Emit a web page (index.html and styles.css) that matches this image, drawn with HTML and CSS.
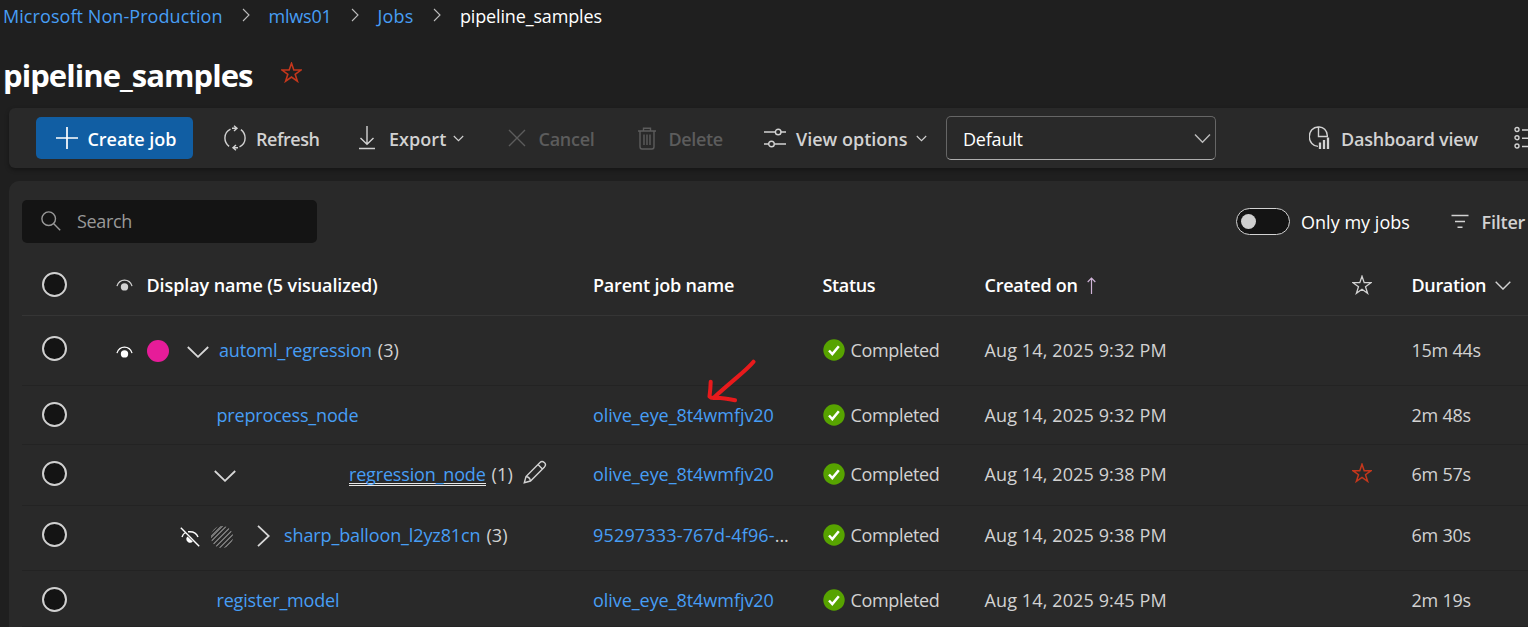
FILE: index.html
```html
<!DOCTYPE html>
<html lang="en">
<head>
<meta charset="utf-8">
<title>pipeline_samples</title>
<link rel="stylesheet" href="styles.css">
</head>
<body>
<svg class="defs" aria-hidden="true">
  <symbol id="star" viewBox="0 0 20 20"><path d="M10 1.2 12.2 7.7H19L13.5 11.7 15.6 18.3 10 14.3 4.4 18.3 6.5 11.7 1 7.7H7.8Z"/></symbol>
  <symbol id="check" viewBox="0 0 22 22"><circle cx="11" cy="11" r="10.7" fill="#57a300"/><path d="M6 11.5 9.3 15 15.8 7.2" fill="none" stroke="#fff" stroke-width="2.5"/></symbol>
  <symbol id="eye" viewBox="0 0 18 14"><path d="M1 8.2C2.5 3.900 5.600 1.900 9 1.900S15.500 3.900 17 8.200" fill="none" stroke="currentColor" stroke-width="1.3"/><circle cx="9" cy="9" r="3.900" fill="currentColor"/></symbol>
</svg>

<nav class="crumbs">
  <a class="c1">Microsoft Non-Production</a>
  <svg class="sep" viewBox="0 0 8 14"><path d="M1 1 7 7 1 13"/></svg>
  <a class="c2">mlws01</a>
  <svg class="sep" viewBox="0 0 8 14"><path d="M1 1 7 7 1 13"/></svg>
  <a class="c3">Jobs</a>
  <svg class="sep" viewBox="0 0 8 14"><path d="M1 1 7 7 1 13"/></svg>
  <span class="c4">pipeline_samples</span>
</nav>

<header class="title">
  <h1>pipeline_samples</h1>
  <svg class="star fav"><use href="#star"/></svg>
</header>

<div class="toolbar">
  <button class="primary">
    <svg width="24" height="24" viewBox="0 0 24 24"><path d="M12 1V23M1 12H23" stroke="#fff" stroke-width="1.700"/></svg>
    <span>Create job</span>
  </button>
  <div class="tool refresh">
    <svg width="22" height="26" viewBox="0 0 22 26" class="line"><path d="M6.500 4.200C2.800 6 .9 9.500 .9 13c0 3.600 1.600 6.400 4.200 8.400M8 3.200h5M10 .8l3 2.400-3 2.700M15.500 21.800c3.700-1.800 5.600-5.300 5.600-8.800 0-3.600-1.600-6.400-4.200-8.400M14 22.800H9M12 20.100l-3 2.700 3 2.400"/></svg>
    <span>Refresh</span>
  </div>
  <div class="tool export">
    <svg width="18" height="24" viewBox="0 0 18 24" class="line"><path d="M9 0V18M2.500 12 9 18.300 15.500 12M1 22.500H17"/></svg>
    <span>Export</span>
    <svg class="caret" viewBox="0 0 11 7"><path d="M.8 1 5.500 5.700 10.200 1"/></svg>
  </div>
  <div class="tool off cancel">
    <svg width="18" height="18" viewBox="0 0 18 18" class="line"><path d="M1 1 17 17M17 1 1 17"/></svg>
    <span>Cancel</span>
  </div>
  <div class="tool off delete">
    <svg width="18" height="23" viewBox="0 0 18 23" class="line"><path d="M0 4H18M5.500 4V1.200H12.500V4M2 4V19.500Q2 22 4 22H14Q16 22 16 19.500V4M6 7.500V18M9 7.500V18M12 7.500V18"/></svg>
    <span>Delete</span>
  </div>
  <div class="tool view">
    <svg width="22" height="20" viewBox="0 0 22 20" class="line"><path d="M0 4H11.500M17 4H22M0 16H5M10.500 16H22"/><circle cx="14.200" cy="4" r="2.800"/><circle cx="7.500" cy="16" r="2.800"/></svg>
    <span>View options</span>
    <svg class="caret" viewBox="0 0 11 7"><path d="M.8 1 5.500 5.700 10.200 1"/></svg>
  </div>
  <div class="select">
    <span>Default</span>
    <svg width="17" height="11" viewBox="0 0 17 11" class="line"><path d="M1 1.500 8.500 9.200 16 1.500"/></svg>
  </div>
  <div class="tool dash">
    <svg width="22" height="24" viewBox="0 0 22 24" class="line"><path d="M9 20.400A8.700 9.700 0 0 1 9 1H10A8 9 0 0 1 18.300 9.500M9.500 1V10.500H18.300V9"/><path d="M11 16.500V23M15 14V23M19 11.500V23" stroke-width="2.300"/></svg>
    <span>Dashboard view</span>
  </div>
  <svg class="list line" width="20" height="24" viewBox="0 0 20 24"><circle cx="3" cy="3.500" r="2"/><circle cx="3" cy="11.700" r="2"/><circle cx="3" cy="20" r="2"/><path d="M8 4H20M8 12.200H20M8 20.500H20"/></svg>
</div>

<main class="panel">
  <div class="filters">
    <div class="search">
      <svg width="20" height="20" viewBox="0 0 20 20" class="line"><circle cx="7.700" cy="7.700" r="6.800"/><path d="M12.500 12.500 19.200 19.200"/></svg>
      <span>Search</span>
    </div>
    <div class="toggle"><i></i></div>
    <span class="mine">Only my jobs</span>
    <svg class="funnel" width="18" height="15" viewBox="0 0 18 15"><path d="M.5 1.500H17.500M4 7.500H14M6.500 13.300H11.500"/></svg>
    <span class="filter">Filter</span>
  </div>

  <div class="row head">
    <i class="radio"></i>
    <div class="name"><svg class="eye dim"><use href="#eye"/></svg><span class="h1c">Display name (5 visualized)</span></div>
    <div class="h2c">Parent job name</div>
    <div class="h3c">Status</div>
    <div class="h4c"><span>Created on</span><svg width="9" height="17" viewBox="0 0 9 17"><path d="M4.500 17V1.200M.7 5 4.500 1.200 8.300 5" fill="none" stroke="#d0b4d8" stroke-width="1.200"/></svg></div>
    <div class="fcell"><svg class="star dim"><use href="#star"/></svg></div>
    <div class="h5c"><span>Duration</span><svg width="16" height="9" viewBox="0 0 16 9" class="line"><path d="M.7 .8 8 8.100 15.300 .8"/></svg></div>
  </div>

  <div class="row r1">
    <i class="radio"></i>
    <div class="name"><svg class="eye"><use href="#eye"/></svg><i class="dot"></i><svg class="down" viewBox="0 0 22 12"><path d="M.8 1 11 10.800 21.200 1"/></svg><a>automl_regression</a><span class="n">(3)</span></div>
    <div></div>
    <div class="status"><svg><use href="#check"/></svg><span>Completed</span></div>
    <div class="date">Aug 14, 2025 9:32 PM</div>
    <div></div>
    <div class="dur">15m 44s</div>
  </div>

  <div class="row r2">
    <i class="radio"></i>
    <div class="name leaf"><a>preprocess_node</a></div>
    <div class="parent"><a>olive_eye_8t4wmfjv20</a></div>
    <div class="status"><svg><use href="#check"/></svg><span>Completed</span></div>
    <div class="date">Aug 14, 2025 9:32 PM</div>
    <div></div>
    <div class="dur">2m 48s</div>
  </div>

  <div class="row r3">
    <i class="radio"></i>
    <div class="name"><svg class="down" viewBox="0 0 22 12"><path d="M.8 1 11 10.800 21.200 1"/></svg><a class="under">regression_node</a><span class="n">(1)</span><svg class="pencil line" width="24" height="24" viewBox="0 0 24 24"><path d="M1.300 22.700 3 16.500 17 2.400Q19 .4 21.300 2.500T21.500 6.900L7.500 21 1.300 22.700ZM3 16.500Q6.800 17 7.500 21M15 4.500 19.400 8.900"/></svg></div>
    <div class="parent"><a>olive_eye_8t4wmfjv20</a></div>
    <div class="status"><svg><use href="#check"/></svg><span>Completed</span></div>
    <div class="date">Aug 14, 2025 9:38 PM</div>
    <div class="fcell"><svg class="star fav"><use href="#star"/></svg></div>
    <div class="dur">6m 57s</div>
  </div>

  <div class="row r4">
    <i class="radio"></i>
    <div class="name"><svg class="eyeoff" width="20" height="20" viewBox="0 0 20 20"><path d="M.8 .8 19.200 19.200M2 10C2.800 7.500 4 6.300 5.500 5.500M8 4.800C13 4.200 16.500 6 18 10" fill="none" stroke="#fff" stroke-width="1.400"/><path d="M7.500 9.500 12.800 14.500A3.500 3.500 0 1 1 7.500 9.500Z" fill="#fff"/></svg><i class="dot hatch"></i><svg class="right" viewBox="0 0 13 22"><path d="M1 .8 11.800 11 1 21.200"/></svg><a class="sharp">sharp_balloon_l2yz81cn</a><span class="n">(3)</span></div>
    <div class="parent"><a class="uuid">95297333-767d-4f96-</a>...</div>
    <div class="status"><svg><use href="#check"/></svg><span>Completed</span></div>
    <div class="date">Aug 14, 2025 9:38 PM</div>
    <div></div>
    <div class="dur">6m 30s</div>
  </div>

  <div class="row r5">
    <i class="radio"></i>
    <div class="name leaf"><a>register_model</a></div>
    <div class="parent"><a>olive_eye_8t4wmfjv20</a></div>
    <div class="status"><svg><use href="#check"/></svg><span>Completed</span></div>
    <div class="date">Aug 14, 2025 9:45 PM</div>
    <div></div>
    <div class="dur">2m 19s</div>
  </div>

  <svg class="arrow" width="52" height="46" viewBox="0 0 52 46"><path d="M47.500 2.700C41 11 27 21 8 38.500M4.700 22.800Q4.500 30 3.500 37.500 5 39.500 10 38.800 18 39 29 41.300" fill="none" stroke="#e81a1c" stroke-width="4" stroke-linecap="round" stroke-linejoin="round"/></svg>
</main>
</body>
</html>
```
FILE: styles.css
```css
* { box-sizing: border-box; }
body {
  margin: 0;
  width: 1528px;
  height: 627px;
  overflow: hidden;
  background: #1f1f1f;
  color: #d2d2d2;
  font: 18px/26px "Open Sans", "Noto Sans", sans-serif;
  letter-spacing: -0.35px;
  white-space: nowrap;
}
svg { flex: none; display: block; }
span, a { flex: none; }
a { color: #479ef5; }
.defs { position: absolute; width: 0; height: 0; }
.line { fill: none; stroke: currentColor; stroke-width: 1.4; }

.crumbs { display: flex; align-items: center; height: 32px; padding-left: 3px; }
.crumbs a, .crumbs span { line-height: 32px; }
.crumbs span { color: #fff; }
.c1 { width: 220px; letter-spacing: 0.07px; }
.c2 { width: 63.5px; letter-spacing: -0.2px; }
.c3 { width: 37px; letter-spacing: 0.2px; }
.c4 { letter-spacing: -0.15px; }
.sep { width: 8px; height: 14px; margin: -3px 19px 0 18.5px; fill: none; stroke: #bdbdbd; stroke-width: 1.1; }

.title { display: flex; height: 76px; padding-left: 3px; }
h1 { margin: 0; width: 277.5px; font-size: 31px; line-height: 87px; font-weight: 700; color: #fff; letter-spacing: -0.95px; }
.star { width: 20px; height: 20px; fill: none; stroke: currentColor; stroke-width: 1.3; }
.fav { color: #c4371c; stroke-width: 1.5; }
.title .star { margin-top: 30px; width: 21px; height: 21px; }

.toolbar {
  display: flex;
  align-items: center;
  height: 60px;
  margin-left: 9px;
  padding-left: 27px;
  background: #292929;
  border-radius: 6px 0 0 6px;
  box-shadow: 0 2px 4px rgba(0, 0, 0, .35);
  font-weight: 600;
}
.toolbar > * { flex: none; }
.toolbar span { padding-top: 2px; }
.primary {
  display: flex;
  align-items: center;
  gap: 9px;
  width: 157px;
  height: 42px;
  padding: 0 0 0 18.5px;
  border: 0;
  border-radius: 5px;
  background: #115ea3;
  color: #fff;
  font: inherit;
  letter-spacing: -0.05px;
}
.tool { display: flex; align-items: center; height: 42px; }
.off { color: #5c5c5c; }
.caret { width: 11px; height: 7px; fill: none; stroke: currentColor; stroke-width: 1.1; }
.refresh { gap: 10px; margin-left: 31px; width: 134px; letter-spacing: -0.45px; }
.export { gap: 13px; width: 150px; letter-spacing: 0.05px; }
.export .caret { margin-left: -6px; }
.cancel { gap: 12.5px; width: 129.5px; letter-spacing: -0.25px; }
.delete { gap: 13px; width: 126.5px; }
.view { gap: 10px; width: 182px; letter-spacing: 0; }
.view .caret { margin-left: -1px; }
.select {
  display: flex;
  align-items: center;
  justify-content: space-between;
  width: 270px;
  height: 44px;
  padding: 0 4px 0 16px;
  border: 1px solid #666;
  border-bottom-color: #adadad;
  border-radius: 5px;
  color: #fff;
  font-weight: 400;
  letter-spacing: -0.2px;
}
.select svg { color: #bdbdbd; }
.dash { gap: 10px; margin-left: 93px; width: 205px; letter-spacing: -0.2px; }

.panel {
  position: relative;
  margin: 13px 0 0 9px;
  height: 446px;
  padding-left: 13px;
  background: #292929;
  border-radius: 10px 0 0 0;
}
.filters { display: flex; align-items: center; height: 62px; padding-top: 19px; }
.search {
  display: flex;
  align-items: center;
  gap: 16px;
  width: 295px;
  height: 43px;
  padding: 0 0 2px 19px;
  background: #141414;
  border-radius: 5px;
  color: #999;
}
.toggle { width: 54px; height: 27px; margin-left: 919px; padding: 5px 4px; border: 1px solid #d2d2d2; border-radius: 14px; background: #141414; }
.toggle i { display: block; width: 15px; height: 15px; border-radius: 50%; background: #cfcfcf; }
.mine { width: 150px; margin-left: 11px; color: #fff; letter-spacing: 0.03px; }
.funnel { fill: none; stroke: #d2d2d2; stroke-width: 1.5; }
.filter { margin-left: 12.5px; font-weight: 600; letter-spacing: -0.2px; }

.row {
  display: grid;
  grid-template-columns: 95px 476px 229.5px 162px 346px 81px 1fr;
  line-height: 58px;
  border-bottom: 1px solid #232323;
  align-items: start;
}
.radio { width: 25px; height: 25px; margin: 16px 0 0 20px; border: 2px solid #d0d0d0; border-radius: 50%; background: #141414; }
.head { height: 73px; line-height: 84px; font-weight: 600; color: #fff; border-bottom-color: #353535; }
.head .radio { margin-top: 29px; }
.head div { display: flex; align-items: center; height: 84px; }
.head .h1c { letter-spacing: -0.1px; }
.head .h2c { letter-spacing: -0.2px; }
.h4c { letter-spacing: -0.25px; gap: 9px; }
.dim { color: #d2d2d2; }
.eye { width: 17px; height: 14px; color: #fff; margin-left: -1px; }
.head .eye { color: #d2d2d2; margin-right: 13.5px; }
.h5c { gap: 9px; }
.h5c svg { color: #d2d2d2; }
.r1 { height: 70px; padding-top: 5px; }
.r1 .radio { margin-top: 15px; }
.r2 { height: 59px; }
.r3 { height: 61px; }
.r4 { height: 65px; }
.r5 { height: 56px; }
.name, .status, .fcell { display: flex; align-items: center; height: 58px; }
.name a { letter-spacing: -0.17px; }
.name .sharp { letter-spacing: -0.12px; }
.parent { letter-spacing: -0.05px; }
.uuid { letter-spacing: 0.17px; }
.date { letter-spacing: 0.12px; }
.dur { letter-spacing: -0.25px; }
.leaf { padding-left: 99.5px; }
.fcell { padding-left: 21px; }
.r3 .fcell { height: 56px; }
.status svg { width: 22px; height: 22px; margin-right: 6px; }
.dot { width: 22px; height: 22px; flex: none; border-radius: 50%; background: #e61c99; }
.hatch { background: repeating-linear-gradient(135deg, #777 0 1.5px, #292929 1.5px 3.5px); }
.down, .right { fill: none; stroke: #d8d8d8; stroke-width: 1.800; }
.down { width: 22px; height: 12px; }
.right { width: 13px; height: 22px; }
.n { margin-left: 6px; letter-spacing: 0.1px; }
.r1 .dot { margin: 2px 18.5px 0 13.5px; }
.r1 .eye { margin-top: 4px; }
.r1 .down { margin: 3px 10px 0 0; }
.r3 .down { margin: 4px 113px 0 97px; }
.under { line-height: 25px; height: 24px; border-bottom: 3px double #e6e6e6; }
.pencil { margin: -4px 0 0 10px; }
.eyeoff { margin: 4px 11px 0 63px; }
.r4 .dot { margin: 4px 24px 0 0; }
.r4 .right { margin: 2px 14px 0 0; }

.arrow { position: absolute; left: 697px; top: 178px; }
```
